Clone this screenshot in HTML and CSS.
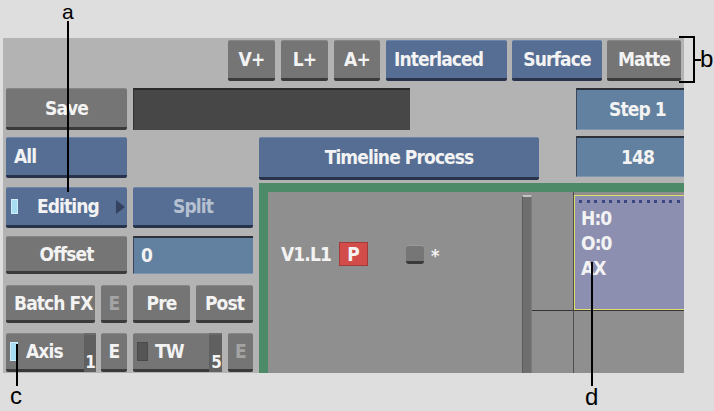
FILE: index.html
```html
<!DOCTYPE html>
<html>
<head>
<meta charset="utf-8">
<title>Timeline Process</title>
<link rel="stylesheet" href="styles.css">
</head>
<body>
<div class="page">
  <div class="panel">
    <div class="toolbar">
      <div class="btn grey w47">V+</div>
      <div class="btn grey w47">L+</div>
      <div class="btn grey w46">A+</div>
      <div class="btn blue w121 txt-left">Interlaced</div>
      <div class="btn blue w90 g5">Surface</div>
      <div class="btn grey w74 g5">Matte</div>
    </div>

    <div class="row row-a">
      <div class="btn grey w121">Save</div>
      <div class="field dark-field"></div>
      <div class="field blue-field step">Step 1</div>
    </div>

    <div class="row row-b">
      <div class="btn blue w121 txt-left">All</div>
      <div class="btn blue tlp">Timeline Process</div>
      <div class="field blue-field frames">148</div>
    </div>

    <div class="lower">
      <div class="leftcol">
        <div class="lrow r-edit">
          <div class="btn blue w121 editing"><span class="ind cyan"></span><span class="lbl">Editing</span><span class="arrow"></span></div>
          <div class="btn blue w120 dim-blue">Split</div>
        </div>
        <div class="lrow r-offset">
          <div class="btn grey w121">Offset</div>
          <div class="field blue-field w120 txt-left">0</div>
        </div>
        <div class="lrow r-batch">
          <div class="btn grey w89 txt-left">Batch FX</div>
          <div class="btn grey w26 dim">E</div>
          <div class="btn grey w57">Pre</div>
          <div class="btn grey w57">Post</div>
        </div>
        <div class="lrow r-axis">
          <div class="btn grey w90 axis"><span class="ind cyan tall"></span><span class="lbl">Axis</span><span class="strip"><span class="num">1</span></span></div>
          <div class="btn grey w26 g5">E</div>
          <div class="btn grey w89 axis"><span class="ind off tall"></span><span class="lbl tw">TW</span><span class="strip wide"><span class="num">5</span></span></div>
          <div class="btn grey w25 dim">E</div>
        </div>
      </div>

      <div class="frame">
        <div class="track-main">
          <div class="track-row">
            <span class="track-name">V1.L1</span>
            <span class="badge">P</span>
            <span class="mini-btn"></span>
            <span class="star">*</span>
          </div>
        </div>
        <div class="vscroll"></div>
        <div class="track-right">
          <div class="cell c1"></div>
          <div class="cell c2">
            <div class="clip">
              <div class="clip-line">H:0</div>
              <div class="clip-line">O:0</div>
              <div class="clip-line">AX</div>
            </div>
          </div>
          <div class="cell c3"></div>
          <div class="cell c4"></div>
        </div>
      </div>
    </div>
  </div>

  <span class="ann ann-a">a</span>
  <span class="lead lead-a"></span>
  <span class="bracket"></span>
  <span class="tick"></span>
  <span class="ann ann-b">b</span>
  <span class="lead lead-c"></span>
  <span class="ann ann-c">c</span>
  <span class="lead lead-d"></span>
  <span class="ann ann-d">d</span>
</div>
</body>
</html>
```

FILE: styles.css
```css
* { box-sizing: border-box; }

html, body {
  margin: 0;
  padding: 0;
  background: #dedede;
}

.page {
  position: relative;
  width: 714px;
  height: 411px;
  padding: 38px 0 0 3px;
  font-family: "DejaVu Sans Condensed", "DejaVu Sans", sans-serif;
  font-stretch: condensed;
  font-weight: bold;
  font-size: 19px;
  letter-spacing: -0.9px;
  color: #f3f3f3;
}

.panel {
  width: 681px;
  height: 335px;
  background: #b3b3b3;
  padding-top: 2px;
  overflow: hidden;
  display: flex;
  flex-direction: column;
}

/* generic buttons */
.btn {
  display: flex;
  align-items: center;
  justify-content: center;
  height: 100%;
  flex-shrink: 0;
  border-radius: 2px;
  white-space: nowrap;
  line-height: 1;
}
.grey {
  background: #757575;
  border-top: 1px solid #868686;
  border-bottom: 3px solid #3a3a3a;
}
.blue {
  background: #566e93;
  border-top: 1px solid #6c84a8;
  border-bottom: 3px solid #28324a;
}
.txt-left { justify-content: flex-start; padding-left: 8px; }
.dim { color: #a4a4a4; }
.dim-blue { color: #b5c0d1; }

.w25 { width: 25px; }
.w26 { width: 26px; }
.w46 { width: 46px; }
.w47 { width: 47px; }
.w57 { width: 57px; }
.w74 { width: 74px; }
.w89 { width: 89px; }
.w90 { width: 90px; }
.w120 { width: 120px; }
.w121 { width: 121px; }

.field {
  display: flex;
  align-items: center;
  justify-content: center;
  height: 100%;
  flex-shrink: 0;
  line-height: 1;
}
.dark-field {
  width: 277px;
  background: #474747;
  border-top: 2px solid #2b2b2b;
  border-left: 1px solid #333;
}
.blue-field {
  background: #62809f;
  border-top: 2px solid #2a2f38;
  border-left: 1px solid #3c4656;
  border-bottom: 1px solid #7d95b0;
}

/* top toolbar */
.toolbar {
  height: 41px;
  display: flex;
  justify-content: flex-end;
  gap: 6px;
  padding-right: 3px;
}
.g5 { margin-left: -1px; }

/* rows */
.row {
  display: flex;
  gap: 6px;
  padding-left: 3px;
  flex-shrink: 0;
}
.row-a { margin-top: 7px; height: 42px; }
.row-a .step { width: 122px; margin-left: 160px; }

.row-b { margin-top: 7px; height: 41px; }
.row-b .tlp { width: 280px; height: 43px; margin-left: 126px; }
.row-b .frames { width: 122px; margin-left: 31px; height: 41px; margin-top: -1px; }

/* lower area */
.lower {
  margin-top: 5px;
  flex: 1;
  display: flex;
  gap: 6px;
  padding-left: 3px;
  min-height: 0;
}
.leftcol {
  width: 247px;
  flex-shrink: 0;
  padding-top: 4px;
  display: flex;
  flex-direction: column;
}
.lrow { display: flex; gap: 6px; flex-shrink: 0; }
.r-edit { height: 41px; }
.r-offset { height: 38px; margin-top: 8px; }
.r-batch { height: 38px; margin-top: 11px; }
.r-axis { height: 39px; margin-top: 10px; }

.r-offset .blue-field { padding-left: 7px; justify-content: flex-start; }

.editing { justify-content: flex-start; padding-left: 5px; }
.ind {
  display: block;
  width: 7px;
  height: 15px;
  flex-shrink: 0;
}
.ind.cyan { background: #a6ddf2; border: 1px solid #cdeefa; }
.ind.off { background: #555; border: 1px solid #4a4a4a; width: 11px; }
.ind.tall { height: 19px; width: 8px; }
.ind.off.tall { width: 11px; }
.editing .lbl { margin-left: 19px; }
.arrow {
  margin-left: auto;
  margin-right: 2px;
  width: 0;
  height: 0;
  border-top: 7px solid transparent;
  border-bottom: 7px solid transparent;
  border-left: 9px solid #34425f;
}

.axis {
  position: relative;
  justify-content: flex-start;
  padding-left: 4px;
}
.axis .lbl { margin-left: 8px; }
.axis .lbl.tw { margin-left: 7px; }
.strip {
  position: absolute;
  right: 0;
  top: -1px;
  bottom: -3px;
  width: 12px;
  background: #606060;
  border-top: 2px solid #6c6c6c;
}
.strip.wide { width: 13px; }
.num {
  position: absolute;
  right: 0;
  bottom: 1px;
  font-size: 17px;
  line-height: 1;
  letter-spacing: 0;
}

/* timeline frame */
.frame {
  width: 425px;
  flex-shrink: 0;
  border-top: 9px solid #4d8a67;
  border-left: 9px solid #4d8a67;
  display: flex;
  background: #8f8f8f;
}
.track-main {
  width: 254px;
  flex-shrink: 0;
  background: #8f8f8f;
  padding: 50px 0 0 13px;
}
.track-row {
  display: flex;
  align-items: center;
  height: 24px;
}
.track-name { line-height: 1; }
.badge {
  margin-left: 8px;
  width: 29px;
  height: 24px;
  background: #d24c4a;
  border: 1px solid #a33a3a;
  display: flex;
  align-items: center;
  justify-content: center;
  line-height: 1;
  letter-spacing: 0;
}
.mini-btn {
  margin-left: 38px;
  width: 18px;
  height: 19px;
  background: #767676;
  border-top: 1px solid #9a9a9a;
  border-bottom: 3px solid #3a3a3a;
  border-radius: 3px;
}
.star {
  margin-left: 7px;
  font-size: 18px;
  line-height: 1;
  margin-top: 4px;
}
.vscroll {
  width: 10px;
  flex-shrink: 0;
  margin-top: 3px;
  background: #6e6e6e;
  border-top: 2px solid #c4c4c4;
  border-left: 1px solid #5c5c5c;
  border-right: 1px solid #7c7c7c;
}
.track-right {
  flex: 1;
  display: grid;
  grid-template-columns: 42px 1fr;
  grid-template-rows: 118px 1fr;
  background: #8f8f8f;
}
.c1 { border-right: 1px solid #4e4e4e; }
.c2 { padding-top: 3px; }
.c3 { border-top: 1px solid #353535; border-right: 1px solid #4e4e4e; }
.c4 { border-top: 1px solid #353535; }
.clip {
  position: relative;
  height: 100%;
  background: #8c8fb0;
  border: 1px solid #e0df6e;
  border-right: none;
  padding: 10px 0 0 6px;
}
.clip::before {
  content: "";
  position: absolute;
  top: 4px;
  left: 4px;
  right: 0;
  height: 3px;
  background: repeating-linear-gradient(90deg, #3b4780 0 3px, transparent 3px 7.5px);
}
.clip-line {
  line-height: 25px;
  height: 25px;
}

/* annotations */
.ann {
  position: absolute;
  font-family: "Liberation Sans", Arial, sans-serif;
  font-weight: normal;
  font-size: 24px;
  line-height: 24px;
  letter-spacing: 0;
  color: #000;
}
.ann-a { left: 62px; top: 0; font-size: 21px; line-height: 24px; }
.ann-b { left: 700px; top: 47px; }
.ann-c { left: 10px; top: 384px; }
.ann-d { left: 585px; top: 385px; }

.lead {
  position: absolute;
  width: 2px;
  background: #000;
}
.lead-a { left: 67px; top: 21px; height: 171px; }
.lead-c { left: 16px; top: 344px; height: 42px; }
.lead-d { left: 591px; top: 262px; height: 124px; }

.bracket {
  position: absolute;
  left: 679px;
  top: 36px;
  width: 16px;
  height: 47px;
  border: 2px solid #000;
  border-left: none;
}
.tick {
  position: absolute;
  left: 695px;
  top: 59px;
  width: 6px;
  height: 2px;
  background: #000;
}
```
